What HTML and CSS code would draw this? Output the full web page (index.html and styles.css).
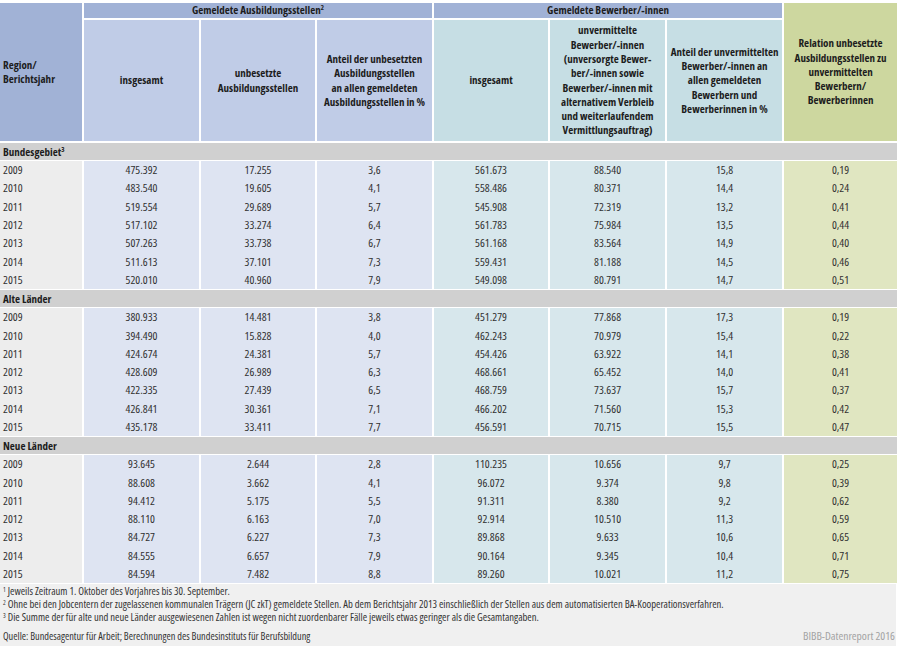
FILE: index.html
```html
<!DOCTYPE html>
<html lang="de">
<head>
<meta charset="utf-8">
<title>Ausbildungsstellen und Bewerber</title>
<link rel="stylesheet" href="styles.css">
</head>
<body>
<table class="tbl">
  <colgroup>
    <col class="w-reg"><col class="w-a1"><col class="w-a2"><col class="w-a3"><col class="w-b1"><col class="w-b2"><col class="w-b3"><col class="w-r">
  </colgroup>
  <thead>
    <tr class="h1">
      <th rowspan="2" class="hd-reg">Region/<br>Berichtsjahr</th>
      <th colspan="3" class="hd-grp">Gemeldete Ausbildungsstellen<sup>2</sup></th>
      <th colspan="3" class="hd-grp">Gemeldete Bewerber/-innen</th>
      <th rowspan="2" class="hd-rel">Relation unbesetzte<br>Ausbildungsstellen zu<br>unvermittelten<br>Bewerbern/<br>Bewerberinnen</th>
    </tr>
    <tr class="h2">
      <th class="hd-a">insgesamt</th>
      <th class="hd-a">unbesetzte<br>Ausbildungsstellen</th>
      <th class="hd-a">Anteil der unbesetzten<br>Ausbildungsstellen<br>an allen gemeldeten<br>Ausbildungsstellen in %</th>
      <th class="hd-b">insgesamt</th>
      <th class="hd-b">unvermittelte<br>Bewerber/-innen<br>(unversorgte Bewer-<br>ber/-innen sowie<br>Bewerber/-innen mit<br>alternativem Verbleib<br>und weiterlaufendem<br>Vermittlungsauftrag)</th>
      <th class="hd-b">Anteil der unvermittelten<br>Bewerber/-innen an<br>allen gemeldeten<br>Bewerbern und<br>Bewerberinnen in %</th>
    </tr>
  </thead>
  <tbody>
    <tr class="grp"><td colspan="8">Bundesgebiet<sup>3</sup></td></tr>
    <tr class="row"><td class="y">2009</td><td class="a">475.392</td><td class="a">17.255</td><td class="a">3,6</td><td class="b">561.673</td><td class="b">88.540</td><td class="b">15,8</td><td class="r">0,19</td></tr>
    <tr class="row"><td class="y">2010</td><td class="a">483.540</td><td class="a">19.605</td><td class="a">4,1</td><td class="b">558.486</td><td class="b">80.371</td><td class="b">14,4</td><td class="r">0,24</td></tr>
    <tr class="row"><td class="y">2011</td><td class="a">519.554</td><td class="a">29.689</td><td class="a">5,7</td><td class="b">545.908</td><td class="b">72.319</td><td class="b">13,2</td><td class="r">0,41</td></tr>
    <tr class="row"><td class="y">2012</td><td class="a">517.102</td><td class="a">33.274</td><td class="a">6,4</td><td class="b">561.783</td><td class="b">75.984</td><td class="b">13,5</td><td class="r">0,44</td></tr>
    <tr class="row"><td class="y">2013</td><td class="a">507.263</td><td class="a">33.738</td><td class="a">6,7</td><td class="b">561.168</td><td class="b">83.564</td><td class="b">14,9</td><td class="r">0,40</td></tr>
    <tr class="row"><td class="y">2014</td><td class="a">511.613</td><td class="a">37.101</td><td class="a">7,3</td><td class="b">559.431</td><td class="b">81.188</td><td class="b">14,5</td><td class="r">0,46</td></tr>
    <tr class="row"><td class="y">2015</td><td class="a">520.010</td><td class="a">40.960</td><td class="a">7,9</td><td class="b">549.098</td><td class="b">80.791</td><td class="b">14,7</td><td class="r">0,51</td></tr>
    <tr class="grp"><td colspan="8">Alte Länder</td></tr>
    <tr class="row"><td class="y">2009</td><td class="a">380.933</td><td class="a">14.481</td><td class="a">3,8</td><td class="b">451.279</td><td class="b">77.868</td><td class="b">17,3</td><td class="r">0,19</td></tr>
    <tr class="row"><td class="y">2010</td><td class="a">394.490</td><td class="a">15.828</td><td class="a">4,0</td><td class="b">462.243</td><td class="b">70.979</td><td class="b">15,4</td><td class="r">0,22</td></tr>
    <tr class="row"><td class="y">2011</td><td class="a">424.674</td><td class="a">24.381</td><td class="a">5,7</td><td class="b">454.426</td><td class="b">63.922</td><td class="b">14,1</td><td class="r">0,38</td></tr>
    <tr class="row"><td class="y">2012</td><td class="a">428.609</td><td class="a">26.989</td><td class="a">6,3</td><td class="b">468.661</td><td class="b">65.452</td><td class="b">14,0</td><td class="r">0,41</td></tr>
    <tr class="row"><td class="y">2013</td><td class="a">422.335</td><td class="a">27.439</td><td class="a">6,5</td><td class="b">468.759</td><td class="b">73.637</td><td class="b">15,7</td><td class="r">0,37</td></tr>
    <tr class="row"><td class="y">2014</td><td class="a">426.841</td><td class="a">30.361</td><td class="a">7,1</td><td class="b">466.202</td><td class="b">71.560</td><td class="b">15,3</td><td class="r">0,42</td></tr>
    <tr class="row"><td class="y">2015</td><td class="a">435.178</td><td class="a">33.411</td><td class="a">7,7</td><td class="b">456.591</td><td class="b">70.715</td><td class="b">15,5</td><td class="r">0,47</td></tr>
    <tr class="grp"><td colspan="8">Neue Länder</td></tr>
    <tr class="row"><td class="y">2009</td><td class="a">93.645</td><td class="a">2.644</td><td class="a">2,8</td><td class="b">110.235</td><td class="b">10.656</td><td class="b">9,7</td><td class="r">0,25</td></tr>
    <tr class="row"><td class="y">2010</td><td class="a">88.608</td><td class="a">3.662</td><td class="a">4,1</td><td class="b">96.072</td><td class="b">9.374</td><td class="b">9,8</td><td class="r">0,39</td></tr>
    <tr class="row"><td class="y">2011</td><td class="a">94.412</td><td class="a">5.175</td><td class="a">5,5</td><td class="b">91.311</td><td class="b">8.380</td><td class="b">9,2</td><td class="r">0,62</td></tr>
    <tr class="row"><td class="y">2012</td><td class="a">88.110</td><td class="a">6.163</td><td class="a">7,0</td><td class="b">92.914</td><td class="b">10.510</td><td class="b">11,3</td><td class="r">0,59</td></tr>
    <tr class="row"><td class="y">2013</td><td class="a">84.727</td><td class="a">6.227</td><td class="a">7,3</td><td class="b">89.868</td><td class="b">9.633</td><td class="b">10,6</td><td class="r">0,65</td></tr>
    <tr class="row"><td class="y">2014</td><td class="a">84.555</td><td class="a">6.657</td><td class="a">7,9</td><td class="b">90.164</td><td class="b">9.345</td><td class="b">10,4</td><td class="r">0,71</td></tr>
    <tr class="row"><td class="y">2015</td><td class="a">84.594</td><td class="a">7.482</td><td class="a">8,8</td><td class="b">89.260</td><td class="b">10.021</td><td class="b">11,2</td><td class="r">0,75</td></tr>
  </tbody>
</table>
<div class="notes">
  <p class="note"><sup>1</sup> Jeweils Zeitraum 1. Oktober des Vorjahres bis 30. September.</p>
  <p class="note"><sup>2</sup> Ohne bei den Jobcentern der zugelassenen kommunalen Trägern (JC zkT) gemeldete Stellen. Ab dem Berichtsjahr 2013 einschließlich der Stellen aus dem automatisierten BA-Kooperationsverfahren.</p>
  <p class="note"><sup>3</sup> Die Summe der für alte und neue Länder ausgewiesenen Zahlen ist wegen nicht zuordenbarer Fälle jeweils etwas geringer als die Gesamtangaben.</p>
  <div class="source">
    <span class="src">Quelle: Bundesagentur für Arbeit; Berechnungen des Bundesinstituts für Berufsbildung</span>
    <span class="brand">BIBB-Datenreport 2016</span>
  </div>
</div>
</body>
</html>
```

FILE: styles.css
```css
html, body {
  margin: 0;
  padding: 0;
  background: #ffffff;
}

body {
  padding-top: 3px;
  font-family: "Open Sans", "Roboto Condensed", "DejaVu Sans", sans-serif;
  font-stretch: 75%;
  color: #2e2e2e;
}

.tbl {
  width: 897px;
  table-layout: fixed;
  border-collapse: collapse;
}

.w-reg { width: 83px; }
.w-a1 { width: 117px; }
.w-a2 { width: 116px; }
.w-a3 { width: 117px; }
.w-b1 { width: 116px; }
.w-b2 { width: 117px; }
.w-b3 { width: 117px; }
.w-r { width: 114px; }

.tbl th,
.tbl td {
  padding: 0;
  border: 0;
}

.tbl th {
  font-size: 11px;
  line-height: 14.3px;
  font-weight: 700;
  color: #1d1d1d;
  text-align: center;
  vertical-align: middle;
  border-right: 2px solid #ffffff;
}

.tbl sup {
  font-size: 7px;
  line-height: 0;
  vertical-align: 4px;
}

.h1 th {
  height: 15px;
  border-bottom: 2px solid #ffffff;
}

.h2 th {
  height: 121px;
  border-bottom: 2px solid #ffffff;
}

.tbl th.hd-reg {
  background: #a1b2d6;
  text-align: left;
  padding-left: 3px;
}

.hd-grp {
  background: #a1b2d6;
}

.hd-a {
  background: #c0cce7;
}

.hd-b {
  background: #c6dee4;
}

.tbl th.hd-rel {
  background: #cdd79f;
  border-right: 0;
}

.grp td {
  height: 17px;
  background: #d0d0d0;
  font-size: 11px;
  font-weight: 700;
  color: #1d1d1d;
  padding-left: 3px;
  border-top: 1px solid #ffffff;
  border-bottom: 1px solid #ffffff;
}

.row td {
  height: 18.3px;
  font-size: 11.5px;
  line-height: 14px;
  text-align: center;
  vertical-align: middle;
  color: #303030;
  border-right: 2px solid #ffffff;
}

.row td.y {
  text-align: left;
  padding-left: 3px;
  background: #ededed;
}

.row td.a {
  background: #dee4f2;
}

.row td.b {
  background: #d7e7ec;
}

.row td.r {
  background: #e0e6c1;
  border-right: 0;
}

.notes {
  width: 893px;
  background: #f0f0f0;
  padding: 1px 0 3px 3px;
  margin-top: 1px;
  font-size: 10.6px;
  font-stretch: 83%;
  line-height: 13px;
  color: #333333;
}

.note {
  margin: 0;
}

.note sup {
  font-size: 6.5px;
  line-height: 0;
  vertical-align: 3px;
}

.source {
  display: flex;
  justify-content: space-between;
  align-items: baseline;
  margin-top: 5px;
}

.src {
  font-size: 10.3px;
  font-stretch: 78%;
}

.brand {
  font-size: 11.5px;
  font-stretch: 75%;
  color: #a3a3a3;
  padding-right: 1px;
}
```
